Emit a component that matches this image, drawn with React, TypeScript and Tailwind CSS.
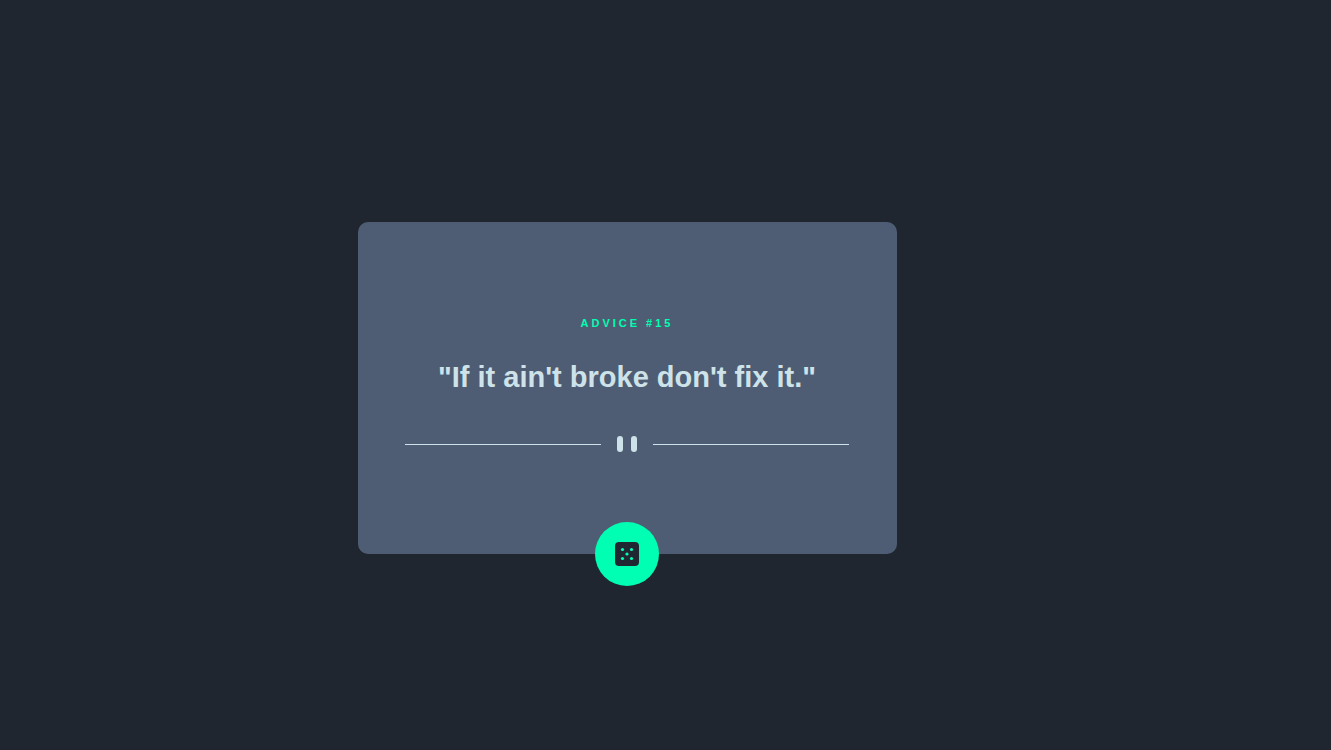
function Divider() {
  return (
    <svg
      className="mt-[38px] h-4 w-full max-w-[444px]"
      viewBox="0 0 444 16"
      aria-hidden="true"
    >
      <path fill="#cee3e9" d="M0 8h196v1H0zM248 8h196v1H248z" />
      <rect x="212" width="6" height="16" rx="3" fill="#cee3e9" />
      <rect x="226" width="6" height="16" rx="3" fill="#cee3e9" />
    </svg>
  );
}

function DiceIcon() {
  return (
    <svg className="size-6" viewBox="0 0 24 24" aria-hidden="true">
      <rect width="24" height="24" rx="4" fill="#202733" />
      <g fill="#00ffb2">
        <circle cx="7.5" cy="7.5" r="1.6" />
        <circle cx="16.5" cy="7.5" r="1.6" />
        <circle cx="12" cy="12" r="1.6" />
        <circle cx="7.5" cy="16.5" r="1.6" />
        <circle cx="16.5" cy="16.5" r="1.6" />
      </g>
    </svg>
  );
}

export default function App() {
  return (
    <main className="flex min-h-screen items-center justify-center bg-[#202630] pt-[26px] pr-[76px] font-['Liberation_Sans',Arial,sans-serif] font-bold">
      <article className="flex w-full max-w-[539px] flex-col items-center rounded-[10px] bg-[#4e5d73] pt-[93px] pr-12 pl-[47px] text-center">
        <h1 className="text-[11px] leading-4 tracking-[3px] text-[#00ffb2]">ADVICE #15</h1>
        <p className="mt-[25px] text-[29px] leading-[42px] text-[#cee3e9]">
          "If it ain't broke don't fix it."
        </p>
        <Divider />
        <button
          type="button"
          aria-label="Get new advice"
          className="mt-[70px] -mb-8 flex size-16 cursor-pointer items-center justify-center rounded-full bg-[#00ffb2]"
        >
          <DiceIcon />
        </button>
      </article>
    </main>
  );
}
